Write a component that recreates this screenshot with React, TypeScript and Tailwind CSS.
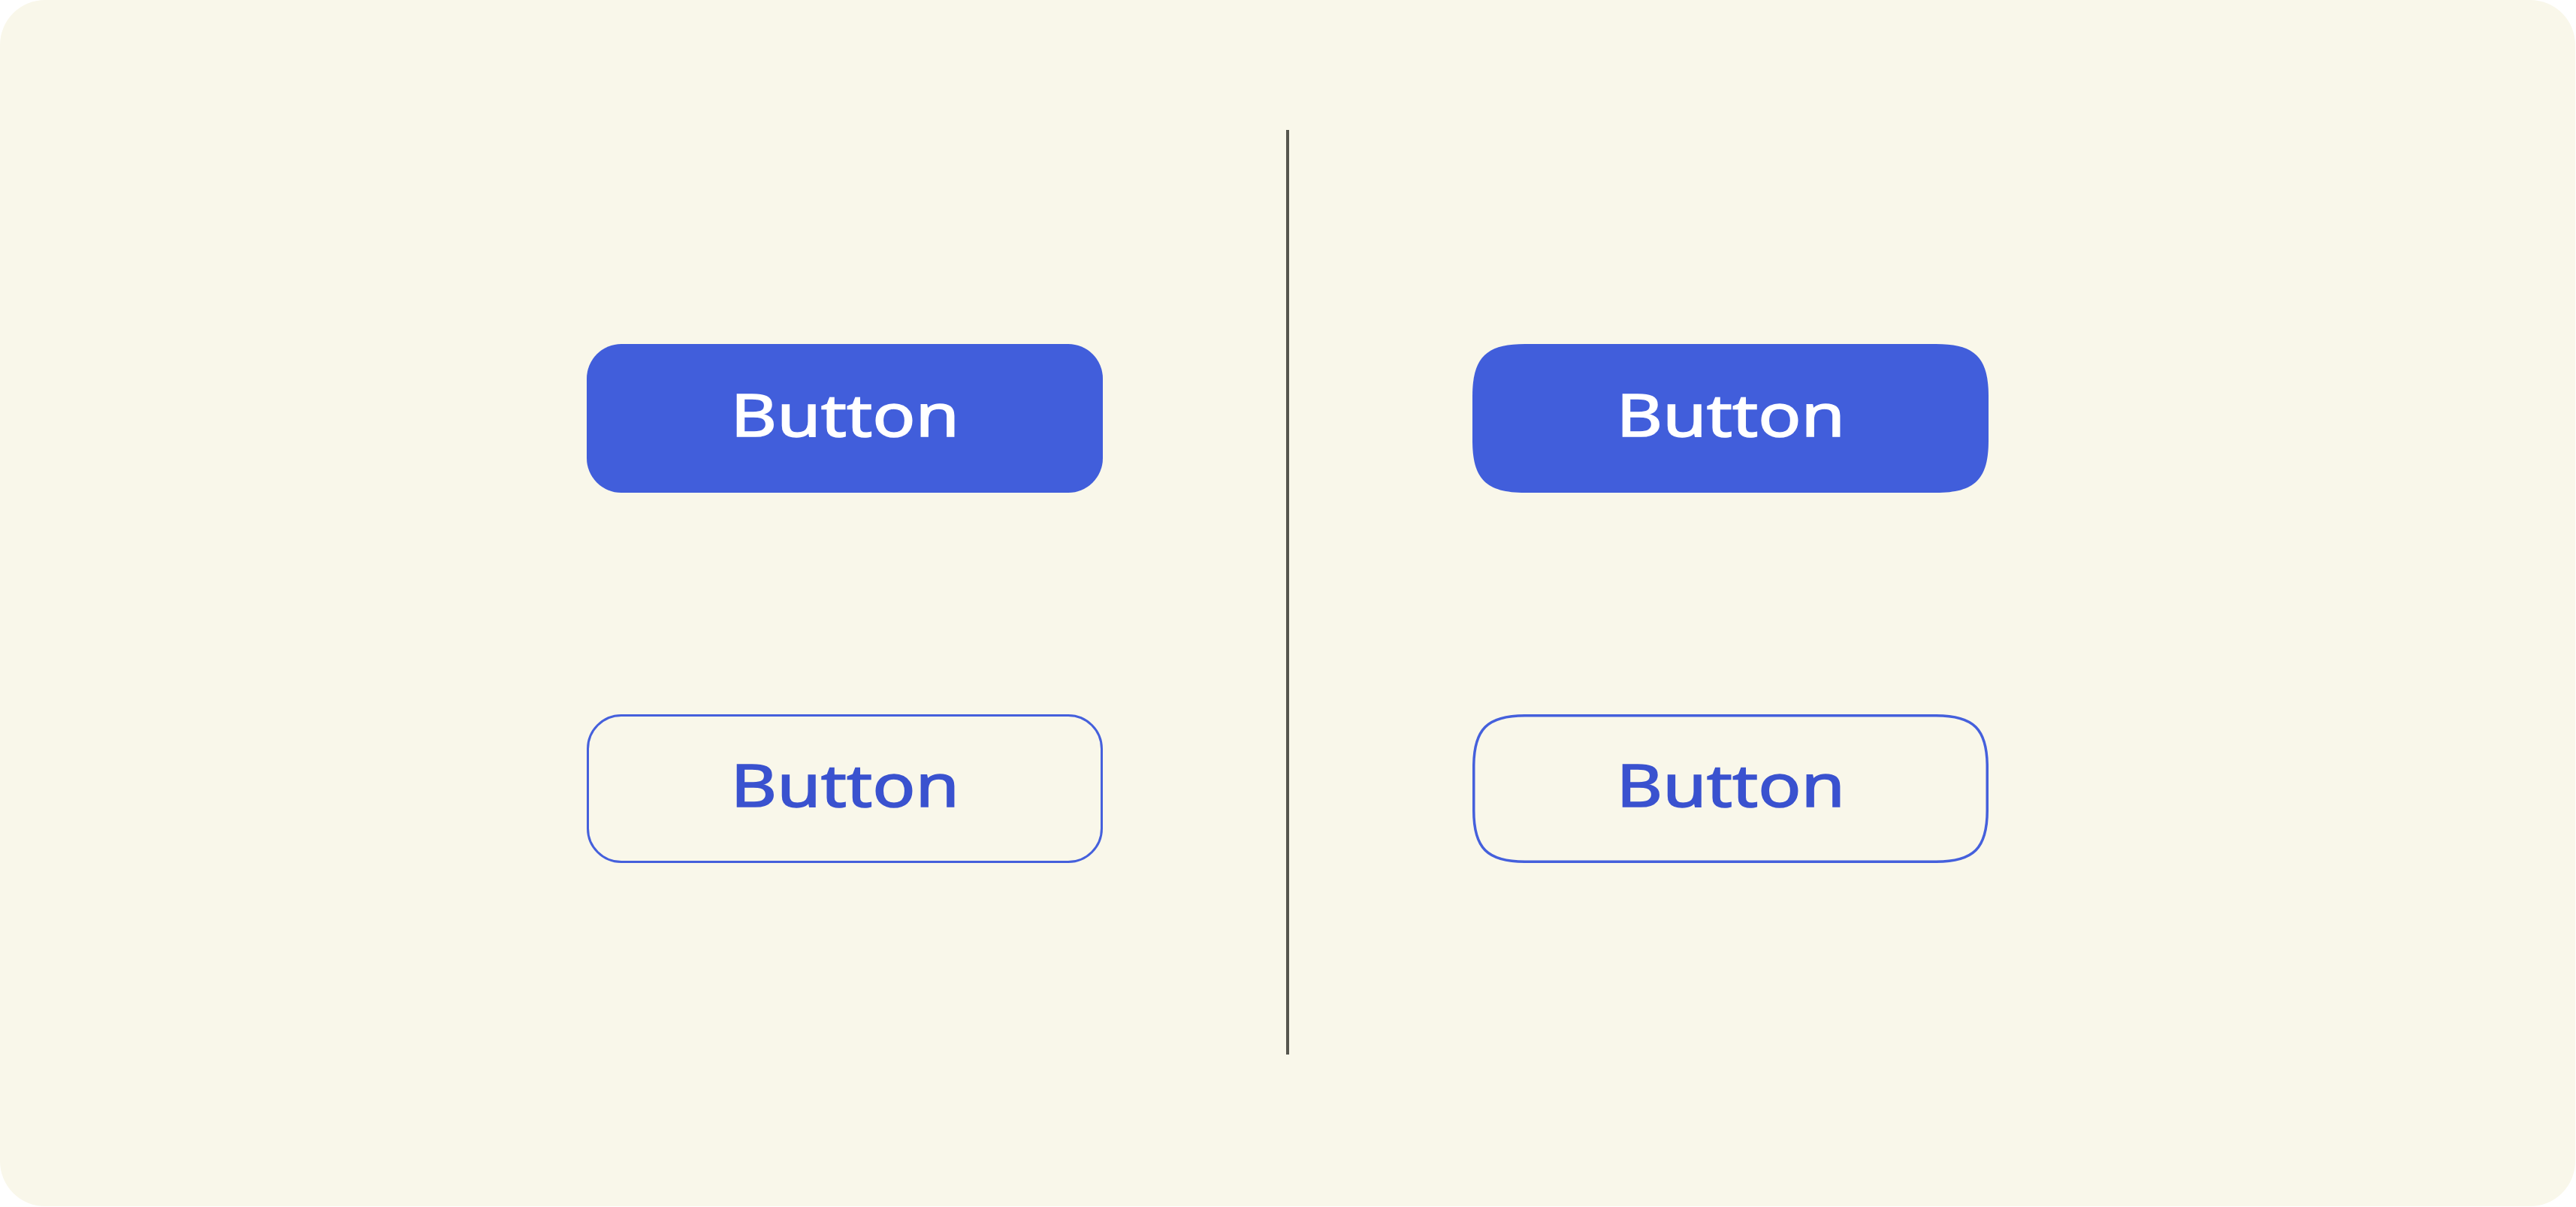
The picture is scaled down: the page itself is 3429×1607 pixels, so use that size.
import type { ReactNode } from "react";

const W = 687;
const H = 198;

// smooth (squircle-like) rounded rect path
function squirclePath(x0: number, y0: number, x1: number, y1: number, r: number, c: number) {
  return [
    `M ${x0} ${y0 + r}`,
    `C ${x0} ${y0 + c} ${x0 + c} ${y0} ${x0 + r} ${y0}`,
    `L ${x1 - r} ${y0}`,
    `C ${x1 - c} ${y0} ${x1} ${y0 + c} ${x1} ${y0 + r}`,
    `L ${x1} ${y1 - r}`,
    `C ${x1} ${y1 - c} ${x1 - c} ${y1} ${x1 - r} ${y1}`,
    `L ${x0 + r} ${y1}`,
    `C ${x0 + c} ${y1} ${x0} ${y1 - c} ${x0} ${y1 - r}`,
    "Z",
  ].join(" ");
}

function Label({ children, className }: { children: ReactNode; className: string }) {
  return (
    <span
      className={`relative inline-block origin-center scale-x-[1.2] text-[79px] font-normal leading-none [-webkit-text-stroke:1.6px_currentColor] ${className}`}
      style={{ fontFamily: '"Noto Sans", "Open Sans", sans-serif' }}
    >
      {children}
    </span>
  );
}

function RoundButton({ outline }: { outline?: boolean }) {
  return (
    <button
      className={
        outline
          ? "flex h-[198px] w-[687px] items-center justify-center rounded-[46px] border-[3px] border-[#4560dc] bg-transparent pb-[13px]"
          : "flex h-[198px] w-[687px] items-center justify-center rounded-[46px] bg-[#415edb] pb-[13px]"
      }
    >
      <Label className={outline ? "text-[#3a52cf]" : "text-white"}>Button</Label>
    </button>
  );
}

function SquircleButton({ outline }: { outline?: boolean }) {
  const s = 1.75;
  return (
    <button className="relative flex h-[198px] w-[687px] items-center justify-center pb-[13px]">
      <svg className="absolute inset-0" width={W} height={H} viewBox={`0 0 ${W} ${H}`}>
        {outline ? (
          <path
            d={squirclePath(s, s, W - s, H - s, 68, 18)}
            fill="none"
            stroke="#4560dc"
            strokeWidth={3.5}
          />
        ) : (
          <path d={squirclePath(0, 0, W, H, 70, 18)} fill="#415edb" />
        )}
      </svg>
      <Label className={outline ? "text-[#3a52cf]" : "text-white"}>Button</Label>
    </button>
  );
}

export default function App() {
  return (
    <div className="min-h-[1607px] w-full bg-white">
      <div className="flex h-[1606px] w-[3428px] items-center justify-center gap-[244px] rounded-[60px] bg-[#f9f7ea]">
        <div className="flex flex-col gap-[295px]">
          <RoundButton />
          <RoundButton outline />
        </div>
        <div className="mt-[173px] h-[1231px] w-[4px] self-start bg-[#56564e]" />
        <div className="flex flex-col gap-[295px]">
          <SquircleButton />
          <SquircleButton outline />
        </div>
      </div>
    </div>
  );
}
